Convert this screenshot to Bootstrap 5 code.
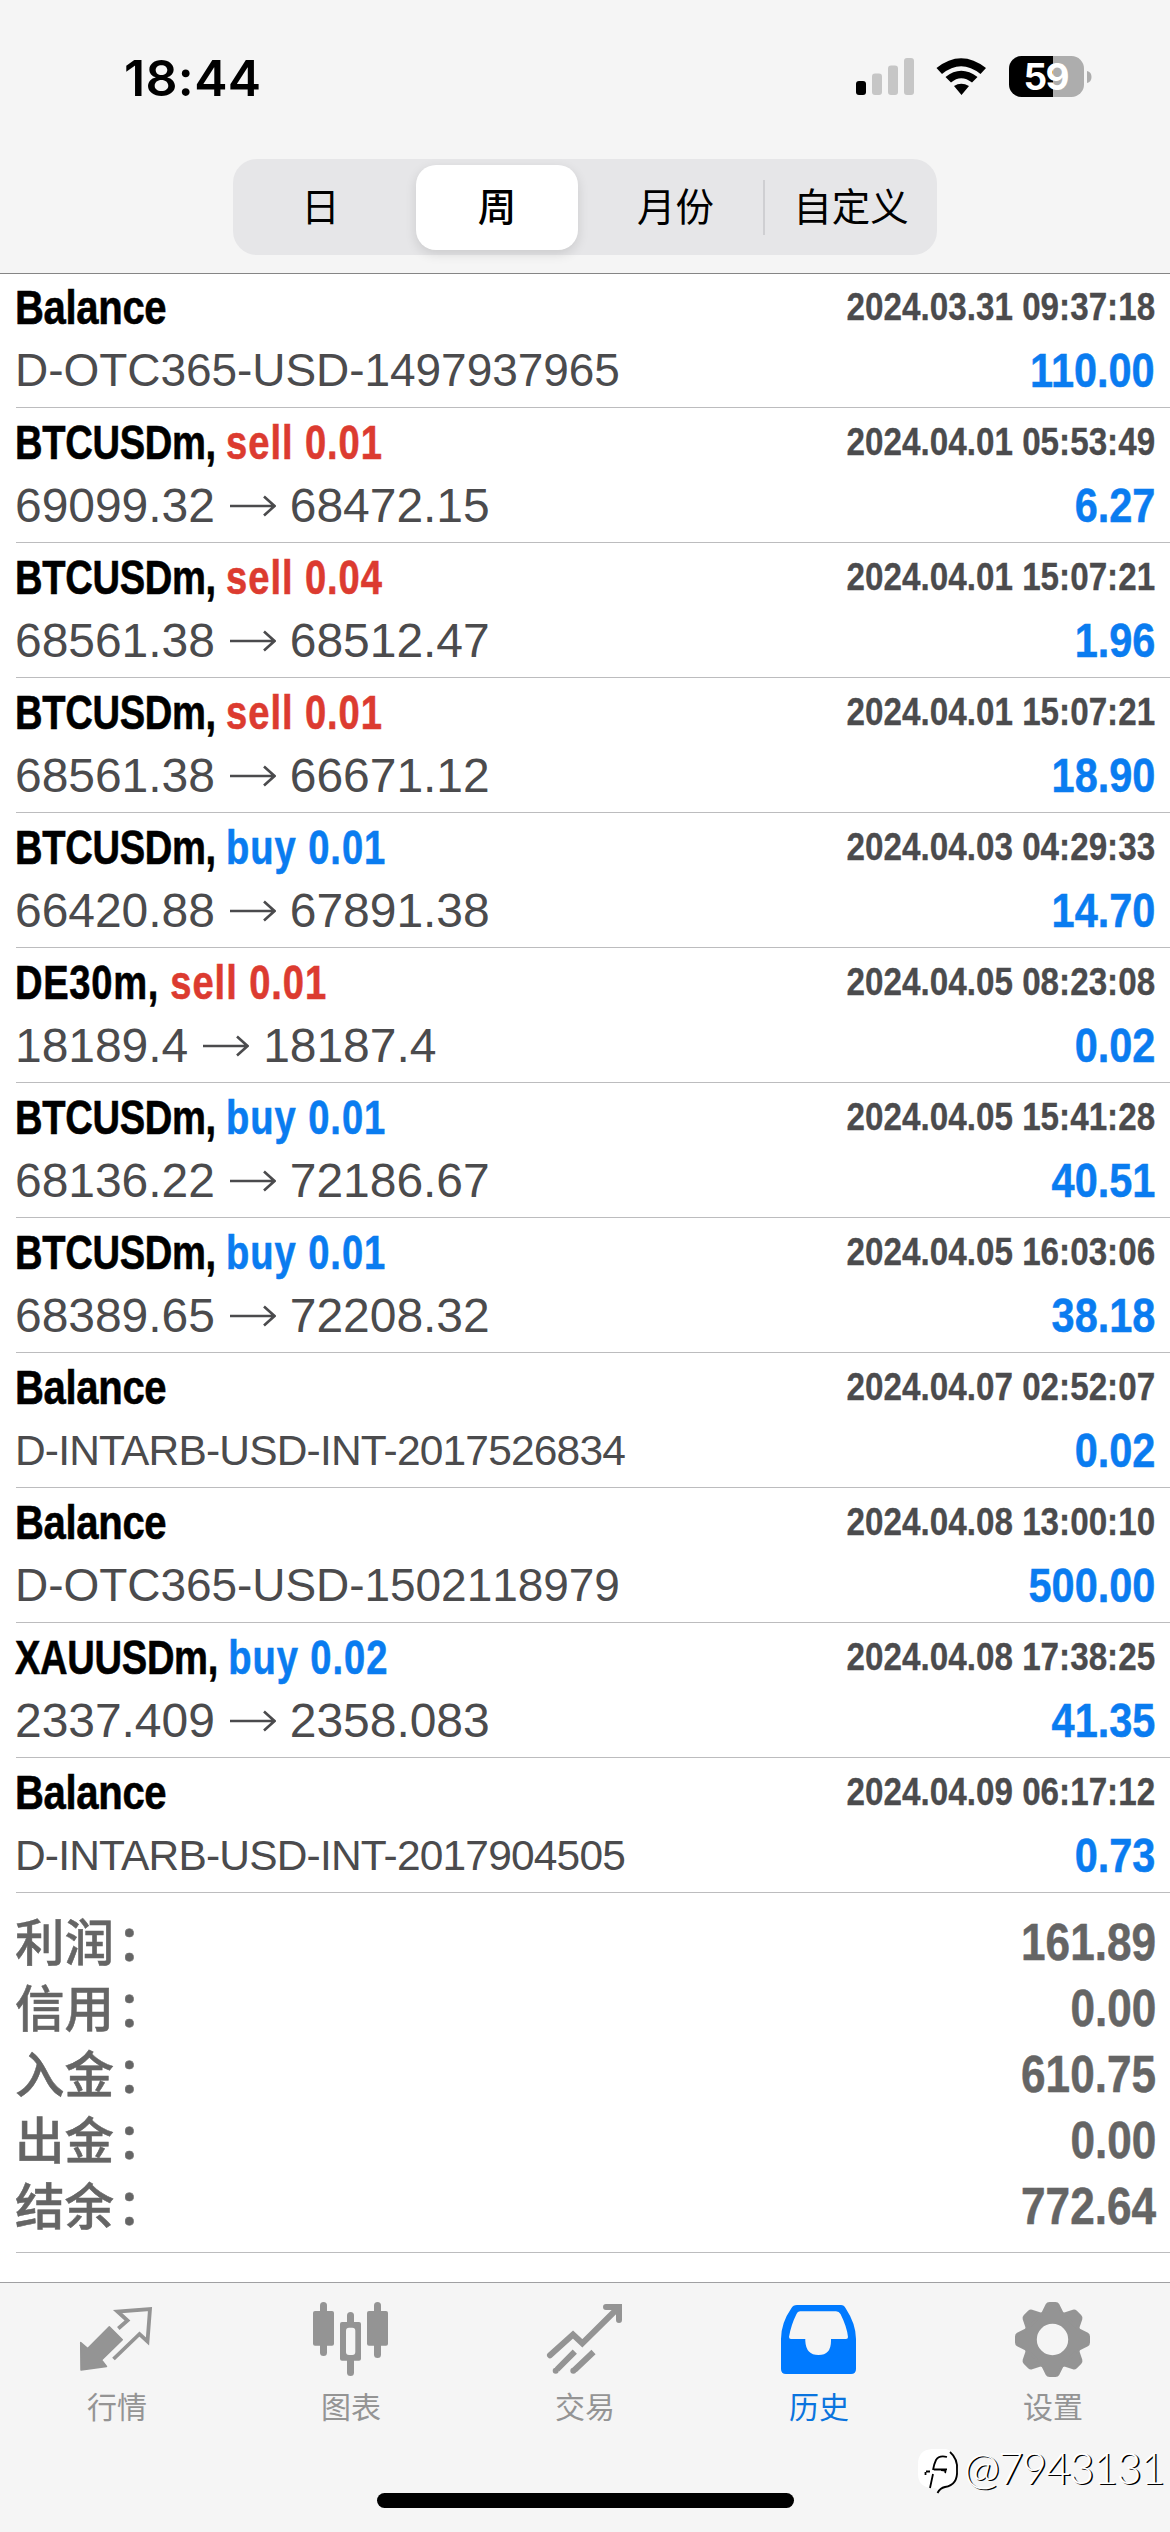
<!DOCTYPE html>
<html lang="zh-CN">
<head>
<meta charset="utf-8">
<meta name="viewport" content="width=device-width, initial-scale=1">
<title>历史</title>
<link href="https://cdn.jsdelivr.net/npm/bootstrap@5.3.0/dist/css/bootstrap.min.css" rel="stylesheet">
<style>
body{width:1170px;height:2532px;overflow:hidden;background:#fff;font-family:"Liberation Sans","Noto Sans CJK SC",sans-serif;color:#4b4b4d}
.app{height:2532px}
.top-area{height:274px;background:#f5f5f5;border-bottom:1px solid #858585;z-index:1}
.status{height:159px;padding:44px 78px 0 124px}
.clock{font:600 50px/68px Inter,sans-serif;color:#000;letter-spacing:.35px}
.status svg{margin-top:-1px}
.seg{width:704px;height:96px;margin-left:233px;border-radius:24px;background:#e6e6e8;padding:5px 0}
.seg button{border:0;background:none;padding:0;color:#000;height:85px;font:400 38.500px/79px "Noto Sans CJK SC",sans-serif;padding-bottom:6px}
.seg .s1{width:183px;padding-right:8px}
.seg .s2{width:162px;background:#fff;border-radius:20px;font-weight:500;box-shadow:0 4px 12px rgba(0,0,0,.12)}
.seg .s3{width:185px;padding-left:10px}
.seg .s4{flex:1}
.seg .bar{width:2px;height:55px;background:#cfcfd2}
.deals{margin-top:-1px}
.deal{height:135px;margin-left:16px;padding:3px 15px 0 0;border-bottom:1px solid #bcbcbe}
.ln{height:62px;line-height:62px;white-space:nowrap}
.ln.low{height:65px;line-height:65px}
.sym{font-size:49px;font-weight:700;color:#000;transform:scaleX(.778);transform-origin:0 50%;margin-left:-1px;letter-spacing:-.4px;-webkit-text-stroke:.6px}
.sym.bal{transform:scaleX(.817)}
.sym.short{letter-spacing:.9px}
.sell,.buy{letter-spacing:1.2px}
.sell{color:#dc3b30}.buy{color:#0a7cf0}
.when{font-size:39px;font-weight:700;transform:scaleX(.852);transform-origin:100% 50%;-webkit-text-stroke:.3px}
.info{font-size:48px;margin-left:-1px;letter-spacing:-.05px}
.info svg{width:46px;height:22px;margin:0 14px 0 15px;vertical-align:5px}
.info.m{font-size:46px;font-kerning:none}
.info.s{font-size:42.5px;letter-spacing:-.82px}
.amt{font-size:48.5px;font-weight:700;color:#0a7cf0;transform:scaleX(.855);transform-origin:100% 50%;-webkit-text-stroke:.5px}
.totals{height:360px;margin-left:16px;padding:17px 14px 0 0;border-bottom:1px solid #bcbcbe;color:#656565}
.tot{height:66px;line-height:66px}
.tot .k{font:500 49.5px/60px "Noto Sans CJK SC",sans-serif;margin-left:-1px;-webkit-text-stroke:.5px}
.tot .k i{font-style:normal;margin-left:3px}
.tot .v{font-size:51px;font-weight:700;transform:scaleX(.865);transform-origin:100% 50%;-webkit-text-stroke:.5px}
.tabs{height:250px;background:#f5f5f5;border-top:1px solid #a0a0a2;color:#949494}
.tab{width:234px;padding-top:12px}
.tab svg{width:90px;height:85px}
.tab span{font:400 30px/46px "Noto Sans CJK SC",sans-serif;margin-top:2px}
.tab.on{color:#007aff}.tab.on span{color:#0a74de}
.home-ind{left:377px;top:2493px;width:417px;height:15px;border-radius:8px;background:#000}
.wm{left:916px;top:2446px}
.wm b{font:300 43px/44px Lato,sans-serif;color:#fff;text-shadow:1.6px .8px 0 #000;letter-spacing:-1.3px}
</style>
<script src="https://cdn.jsdelivr.net/npm/bootstrap@5.3.0/dist/js/bootstrap.bundle.min.js"></script>
</head>
<body>
<svg class="d-none"><defs><symbol id="arr" viewBox="0 0 46 22"><path d="M0 11H44M34 1.500L44.500 11L34 20.500" fill="none" stroke="#4b4b4d" stroke-width="2.600"/></symbol></defs></svg>
<div class="app d-flex flex-column position-relative">
<header class="top-area position-relative flex-shrink-0">
<div class="status d-flex justify-content-between align-items-start">
<span class="clock">18:44</span>
<svg width="236" height="68" viewBox="856 44 236 68">
<rect x="856" y="82" width="10" height="14" rx="3"/>
<g fill="#c6c6c6"><rect x="872" y="74.500" width="10" height="21.500" rx="3"/><rect x="888" y="66.500" width="10" height="29.500" rx="3"/><rect x="904" y="59" width="10" height="37" rx="3"/></g>
<path d="M936.500 69Q961 49.500 986 69L980.500 75Q961 59.500 942 75ZM945.500 78Q961 65.500 977.500 78L972 83.500Q961 75 951 83.500ZM954 87Q961 82.500 969 87L961.500 96Z"/>
<clipPath id="bt"><rect x="1009" y="57" width="75" height="41" rx="12.500"/></clipPath>
<g clip-path="url(#bt)"><path d="M1009 57h44v41h-44z"/><path fill="#adadad" d="M1053 57h31v41h-31z"/></g>
<path d="M1087 72Q1091.500 73 1091.500 78T1087 84Z" fill="#adadad"/>
<text x="1046.500" y="91" text-anchor="middle" font-family="Inter" font-weight="700" font-size="37" textLength="46" fill="#fff">59</text>
</svg>
</div>
<nav class="seg d-flex align-items-center"><button class="s1">日</button><button class="s2">周</button><button class="s3">月份</button><div class="bar"></div><button class="s4">自定义</button></nav>
</header>
<main class="deals flex-shrink-0" id="deals"></main>
<section class="totals flex-shrink-0">
<div class="tot d-flex justify-content-between"><span class="k">利润<i>：</i></span><span class="v">161.89</span></div>
<div class="tot d-flex justify-content-between"><span class="k">信用<i>：</i></span><span class="v">0.00</span></div>
<div class="tot d-flex justify-content-between"><span class="k">入金<i>：</i></span><span class="v">610.75</span></div>
<div class="tot d-flex justify-content-between"><span class="k">出金<i>：</i></span><span class="v">0.00</span></div>
<div class="tot d-flex justify-content-between"><span class="k">结余<i>：</i></span><span class="v">772.64</span></div>
</section>
<footer class="tabs d-flex mt-auto flex-shrink-0">
<div class="tab d-flex flex-column align-items-center"><svg viewBox="0 0 90 85"><path fill="currentColor" stroke="currentColor" stroke-width="1.500" stroke-linejoin="round" d="M8.700 47.500L15.700 53.500L37.300 31.700L50.300 44.700L29.500 65L34.500 71.500L9 75Z"/><path fill="none" stroke="currentColor" stroke-width="3.800" d="M46.300 33.500L55.500 25.500L45.500 16.500L78 14L75.500 46.500L67.500 39L41.500 64"/></svg><span>行情</span></div>
<div class="tab d-flex flex-column align-items-center"><svg viewBox="0 0 90 85"><g fill="currentColor"><rect x="7" y="16" width="21" height="34.700" rx="2"/><rect x="14" y="7" width="7" height="54" rx="3.500"/><rect x="34" y="27" width="21" height="38.700" rx="2"/><rect x="41" y="17" width="7" height="64" rx="3.500"/><rect x="61" y="16" width="21" height="34.700" rx="2"/><rect x="68" y="7" width="7" height="56" rx="3.500"/></g><rect x="40" y="32.700" width="9.300" height="27.300" rx="3" fill="#f5f5f5"/></svg><span>图表</span></div>
<div class="tab d-flex flex-column align-items-center"><svg viewBox="0 0 90 85"><g fill="none" stroke="currentColor" stroke-width="6"><path stroke-linecap="round" d="M10 60.300L33 39.500L42.300 48.300L78 13"/><path stroke-linecap="round" d="M66 12H79V25"/><path d="M17 74.500L34.800 56.700M34.500 75L53.500 57"/></g><g fill="currentColor"><circle cx="15.700" cy="75.800" r="3"/><circle cx="33.300" cy="75.800" r="3"/></g></svg><span>交易</span></div>
<div class="tab on d-flex flex-column align-items-center"><svg viewBox="0 0 90 85"><path fill="currentColor" d="M23 10H67Q70 10 71.500 13Q82 29 82 44V74Q82 79 77 79H12Q7 79 7 74V44Q7 28 17.500 13Q19 10 23 10Z"/><path fill="#f5f5f5" d="M26 16.300H62Q65 16.300 66.500 19Q73 32 74 42Q74 44 72 44H57V46Q57 60 44.500 60T31.300 46V44H17Q15 44 15 42Q17 30 22.500 19Q23.500 16.300 26 16.300Z"/></svg><span>历史</span></div>
<div class="tab d-flex flex-column align-items-center"><svg viewBox="0 0 90 85"><defs><path id="th" d="M34 19L38.700 9.500Q39.500 8 41.500 8H47.500Q49.500 8 50.300 9.500L55 19Z" stroke="currentColor" stroke-width="2" stroke-linejoin="round"/></defs><g fill="currentColor"><circle cx="44.500" cy="44.500" r="22.500" fill="none" stroke="currentColor" stroke-width="13.600"/><use href="#th"/><use href="#th" transform="rotate(45 44.500 44.500)"/><use href="#th" transform="rotate(90 44.500 44.500)"/><use href="#th" transform="rotate(135 44.500 44.500)"/><use href="#th" transform="rotate(180 44.500 44.500)"/><use href="#th" transform="rotate(225 44.500 44.500)"/><use href="#th" transform="rotate(270 44.500 44.500)"/><use href="#th" transform="rotate(315 44.500 44.500)"/></g></svg><span>设置</span></div>
</footer>
<div class="home-ind position-absolute"></div>
<div class="wm position-absolute d-flex"><svg width="48" height="52" viewBox="0 0 48 52"><path d="M16 3H30Q41 6 41 20V28Q41 41 28 42L22 46Q22 42 18 42Q2 42 2 28V18Q2 4 16 3Z" fill="#fff"/><path d="M34 6Q42 13 41 24Q42 39 29 41Q24 42 21.500 47" fill="none" stroke="#000" stroke-width="1.800"/><path d="M31 11Q23 9 20 14Q18 18 17 24M17 28L14 42M10 25.500H14M9.500 26V29M18 23.500H31M25 24Q31 24 29 27" fill="none" stroke="#000" stroke-width="1.800"/></svg><b>@7943131</b></div>
</div>
<script>
const deals=[
["Balance","","D-OTC365-USD-1497937965","2024.03.31 09:37:18","110.00","m"],
["BTCUSDm","sell 0.01","69099.32|68472.15","2024.04.01 05:53:49","6.27"],
["BTCUSDm","sell 0.04","68561.38|68512.47","2024.04.01 15:07:21","1.96"],
["BTCUSDm","sell 0.01","68561.38|66671.12","2024.04.01 15:07:21","18.90"],
["BTCUSDm","buy 0.01","66420.88|67891.38","2024.04.03 04:29:33","14.70"],
["DE30m","sell 0.01","18189.4|18187.4","2024.04.05 08:23:08","0.02"],
["BTCUSDm","buy 0.01","68136.22|72186.67","2024.04.05 15:41:28","40.51"],
["BTCUSDm","buy 0.01","68389.65|72208.32","2024.04.05 16:03:06","38.18"],
["Balance","","D-INTARB-USD-INT-2017526834","2024.04.07 02:52:07","0.02","s"],
["Balance","","D-OTC365-USD-1502118979","2024.04.08 13:00:10","500.00","m"],
["XAUUSDm","buy 0.02","2337.409|2358.083","2024.04.08 17:38:25","41.35"],
["Balance","","D-INTARB-USD-INT-2017904505","2024.04.09 06:17:12","0.73","s"]];
document.getElementById("deals").innerHTML=deals.map(([s,op,info,t,a,c])=>`<article class="deal"><div class="ln d-flex justify-content-between"><span class="sym ${op?(s.length<6?"short":""):"bal"}">${s}${op?`, <span class="${op.split(" ")[0]}">${op}</span>`:""}</span><span class="when">${t}</span></div><div class="ln low d-flex justify-content-between"><span class="info ${c||""}">${info.replace("|",'<svg><use href="#arr"/></svg>')}</span><span class="amt">${a}</span></div></article>`).join("");
</script>
</body>
</html>
